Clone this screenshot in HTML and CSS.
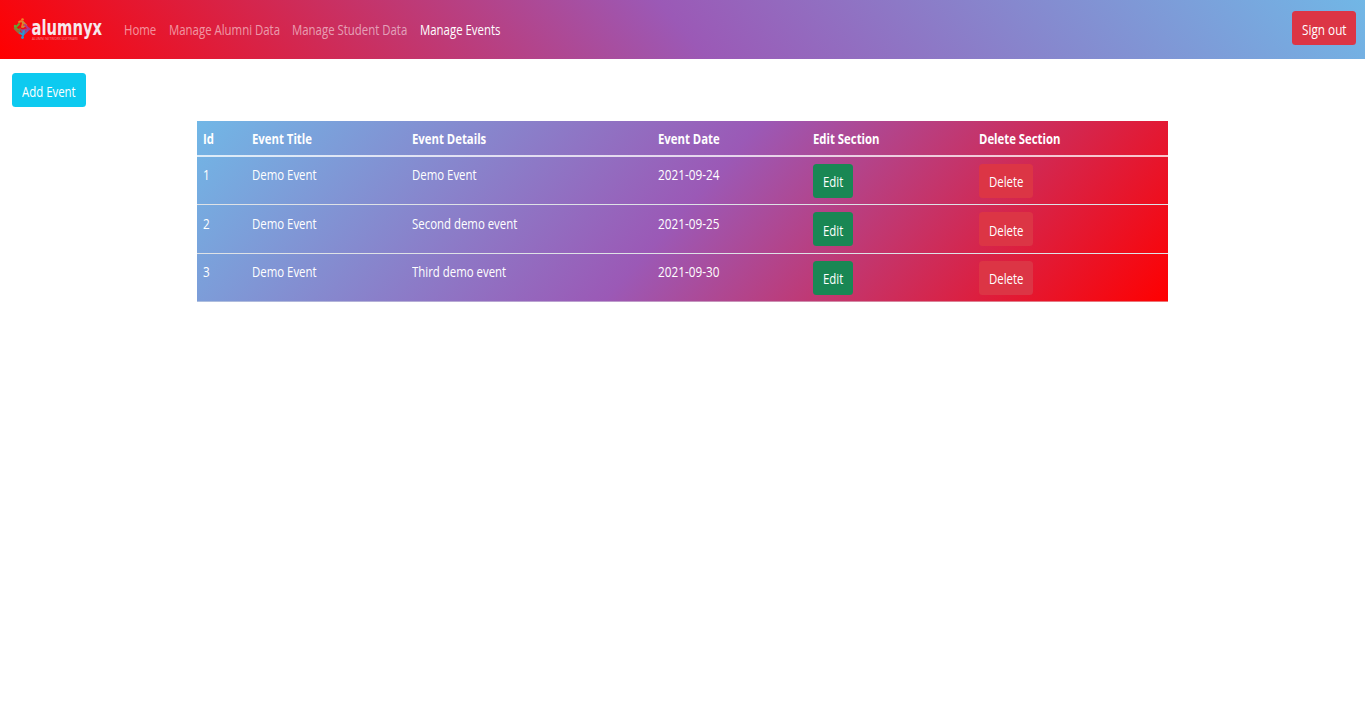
FILE: index.html
```html
<!DOCTYPE html>
<html lang="en">
<head>
<meta charset="utf-8">
<title>Manage Events</title>
<link rel="stylesheet" href="styles.css">
</head>
<body>
<nav class="navbar">
  <a class="brand" href="#" aria-label="alumnyx">
    <svg width="92" height="30" viewBox="0 0 92 30">
      <g fill="none" stroke-width="1.9" stroke-linecap="round">
        <path d="M7 7q3-2 4 1l-1 4" stroke="#ee7b28"/>
        <path d="M11 7l3 3-3 2" stroke="#c68b42"/>
        <path d="M7 9l-4 4 4 2" stroke="#65a52d"/>
        <path d="M3 14l4 4 1-4" stroke="#94703e"/>
        <path d="M13 10l4 4-5 1" stroke="#b2368b"/>
        <path d="M16 15l-5 5-1-5" stroke="#7857a5"/>
        <path d="M8 18l3 2 1-4" stroke="#239bd1"/>
      </g>
      <circle cx="10.5" cy="4.5" r="1.3" fill="#f08427"/>
      <circle cx="3" cy="11" r="1.2" fill="#69a33a"/>
      <circle cx="17.5" cy="14" r="1.2" fill="#a8388f"/>
      <circle cx="10.5" cy="22.5" r="1.4" fill="#239bd1"/>
      <text class="brand-name" transform="translate(19.5 20.3) scale(.72 1)">alumnyx</text>
      <text class="brand-tag" transform="translate(20 24.8) scale(.93 1)">ALUMNI NETWORK SOFTWARE</text>
    </svg>
  </a>
  <a class="link w-home" href="#"><span class="t">Home</span></a>
  <a class="link w-alumni" href="#"><span class="t">Manage Alumni Data</span></a>
  <a class="link w-student" href="#"><span class="t">Manage Student Data</span></a>
  <a class="link w-events active" href="#"><span class="t">Manage Events</span></a>
  <a class="btn danger signout" href="#"><span class="t wide">Sign out</span></a>
</nav>
<main>
  <a class="btn info add" href="#"><span class="t">Add Event</span></a>
  <div class="table">
    <div class="row head"><div><span class="t">Id</span></div><div><span class="t">Event Title</span></div><div><span class="t">Event Details</span></div><div><span class="t">Event Date</span></div><div><span class="t">Edit Section</span></div><div><span class="t">Delete Section</span></div></div>
    <div class="row"><div><span class="t wide">1</span></div><div><span class="t">Demo Event</span></div><div><span class="t">Demo Event</span></div><div><span class="t wide">2021-09-24</span></div><div class="action"><a class="btn success" href="#"><span class="t">Edit</span></a></div><div class="action"><a class="btn danger delete" href="#"><span class="t">Delete</span></a></div></div>
    <div class="row tall"><div><span class="t wide">2</span></div><div><span class="t">Demo Event</span></div><div><span class="t">Second demo event</span></div><div><span class="t wide">2021-09-25</span></div><div class="action"><a class="btn success" href="#"><span class="t">Edit</span></a></div><div class="action"><a class="btn danger delete" href="#"><span class="t">Delete</span></a></div></div>
    <div class="row"><div><span class="t wide">3</span></div><div><span class="t">Demo Event</span></div><div><span class="t">Third demo event</span></div><div><span class="t wide">2021-09-30</span></div><div class="action"><a class="btn success" href="#"><span class="t">Edit</span></a></div><div class="action"><a class="btn danger delete" href="#"><span class="t">Delete</span></a></div></div>
  </div>
</main>
</body>
</html>
```
FILE: styles.css
```css
* { box-sizing: border-box; }
body { margin: 0; background: #fff; font: 14px/21px "Open Sans", "Noto Sans", sans-serif; color: #fff; }
a { color: inherit; text-decoration: none; }
.t { display: inline-block; white-space: nowrap; transform: scaleX(.815); transform-origin: 0 50%; }
.wide { transform: scaleX(.84); }
.head .t { transform: scaleX(.81); }
.navbar { display: flex; align-items: center; height: 59px; padding: 0 9px 0 12px; background: linear-gradient(48.8deg, red, #9b59b6, #71b7e6); }
.brand { display: flex; width: 112px; }
.brand-name { font: bold 20.5px "DejaVu Sans", sans-serif; fill: #f7e8ec; }
.brand-tag { font: 3.5px "Open Sans", sans-serif; fill: #f58a90; }
.link { color: rgba(255,255,255,.55); margin-top: -1px; }
.active { color: #fff; }
.w-home { width: 44.5px; }
.w-alumni { width: 123.5px; }
.w-student { width: 127.5px; }
.w-events { width: 90px; }
.btn { display: block; height: 34px; padding: 8px 0 0 10px; border-radius: 3.5px; line-height: 21px; }
.danger { background: #dc3545; }
.info { background: #0dcaf0; }
.success { background: #198754; width: 40px; }
.delete { width: 54px; }
.signout { width: 64px; margin: -3px 0 0 auto; padding-left: 9.5px; }
.add { width: 74px; margin: 14px 0 14px 12px; }
.table { width: 971px; margin: 0 auto; background: linear-gradient(131.2deg, #71b7e6, #9b59b6, red); }
.row { display: grid; grid-template-columns: 49px 160px 246px 154.6px 166px 195.4px; height: 48px; border-bottom: 1px solid #dee2e6; }
.row > div { padding: 7px 6px 0; }
.row .btn { padding-top: 7px; }
.row.tall { height: 49px; }
.row.tall > div:not(.action) { padding-top: 8px; }
.row.tall .btn { padding-top: 8px; }
.row:last-child { border-bottom-color: rgba(222,226,230,.5); }
.row.head { height: 36px; font-weight: 700; border-bottom: 2px solid rgba(255,255,255,.75); }
```
